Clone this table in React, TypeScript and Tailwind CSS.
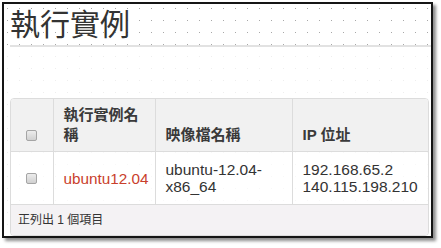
export default function App() {
  const font = "font-['Liberation_Sans','Noto_Sans_CJK_TC',sans-serif]";
  return (
    <div className={`pt-[2px] pl-[2px] bg-white w-[441px] h-[248px] ${font}`}>
      <div className="flex flex-col w-[431px] h-[236px] border-2 border-[#151515] bg-white bg-[image:conic-gradient(from_270deg_at_1px_1px,#a8a8a8_90deg,transparent_0)] bg-[length:12px_12px] bg-[position:3px_4px] shadow-[3px_3px_3px_rgba(0,0,0,0.45)]">
        <div className="pl-[6px]">
          <div className="pb-[5px] border-b-2 border-[#e2e2e2]">
            <h1 className="text-[30px] leading-[36px] text-[#333] font-['Noto_Sans_CJK_TC',sans-serif]">執行實例</h1>
          </div>
        </div>
        <div className="flex-1 bg-[rgba(255,255,255,0.8)] pl-[6px] pt-[51px]">
          <div className="w-[419px] border border-[#dcdcdc] rounded-[4px] overflow-hidden">
            <table className="w-full table-fixed border-collapse text-[#333]">
              <colgroup>
                <col className="w-[42px]" />
                <col className="w-[102px]" />
                <col className="w-[137px]" />
                <col />
              </colgroup>
              <thead>
                <tr className="bg-[#f1f1f1]">
                  <th className="align-bottom border-r border-b border-[#dcdcdc] pb-[10px]">
                    <div className="mx-auto w-[11px] h-[11px] rounded-[2px] border border-[#a5a5a5] bg-[linear-gradient(#ececec,#d0d0d0)]" />
                  </th>
                  <th className="align-bottom text-left border-r border-b border-[#dcdcdc] px-[10px] pt-[6px] pb-[6px] text-[15px] leading-[20px] font-bold text-[#3a3a3a]">
                    執行實例名稱
                  </th>
                  <th className="align-bottom text-left border-r border-b border-[#dcdcdc] px-[10px] pt-[6px] pb-[6px] text-[15px] leading-[20px] font-bold text-[#3a3a3a]">
                    映像檔名稱
                  </th>
                  <th className="align-bottom text-left border-b border-[#dcdcdc] px-[10px] pt-[6px] pb-[6px] text-[15px] leading-[20px] font-bold text-[#3a3a3a]">
                    IP 位址
                  </th>
                </tr>
              </thead>
              <tbody>
                <tr className="bg-[rgba(255,255,255,0.6)]">
                  <td className="align-middle border-r border-b border-[#dcdcdc]">
                    <div className="mx-auto w-[11px] h-[11px] rounded-[2px] border border-[#a5a5a5] bg-[linear-gradient(#ececec,#d0d0d0)]" />
                  </td>
                  <td className="align-middle border-r border-b border-[#dcdcdc] px-[10px] py-[9px] text-[15.3px] leading-[17px] text-[#c9402c] whitespace-nowrap">
                    ubuntu12.04
                  </td>
                  <td className="align-middle border-r border-b border-[#dcdcdc] px-[10px] py-[9px] text-[15.5px] leading-[17px]">
                    ubuntu-12.04-x86_64
                  </td>
                  <td className="align-middle border-b border-[#dcdcdc] px-[10px] py-[9px] text-[15.5px] leading-[17px]">
                    192.168.65.2
                    <br />
                    140.115.198.210
                  </td>
                </tr>
              </tbody>
              <tfoot>
                <tr className="bg-[#f4f2f4]">
                  <td colSpan={4} className="pl-[7px] pt-[6px] pb-[6px] text-[12px] leading-[18px] text-[#333]">
                    正列出 1 個項目
                  </td>
                </tr>
              </tfoot>
            </table>
          </div>
        </div>
      </div>
    </div>
  );
}
